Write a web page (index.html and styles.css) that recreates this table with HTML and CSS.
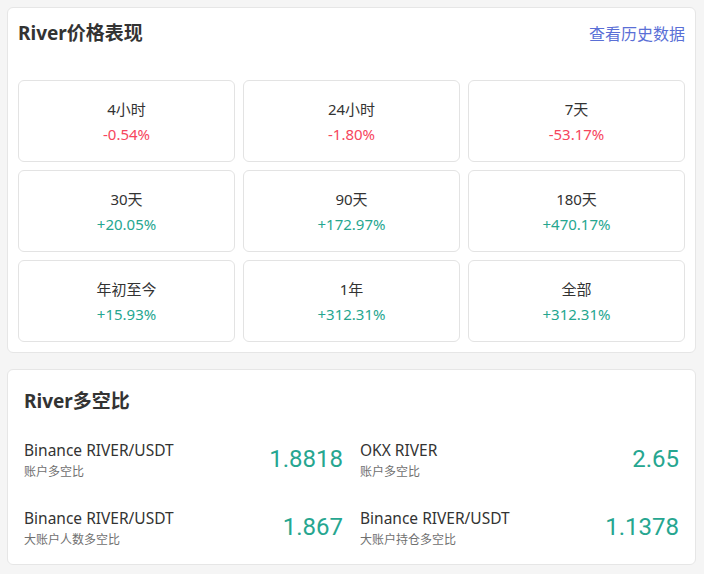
FILE: index.html
```html
<!DOCTYPE html>
<html lang="zh-CN">
<head>
<meta charset="utf-8">
<link rel="stylesheet" href="styles.css">
</head>
<body>
<section class="card perf">
  <header class="perf-head">
    <h2 class="title">River价格表现</h2>
    <a class="link" href="#">查看历史数据</a>
  </header>
  <div class="grid">
    <div class="cell"><div class="label">4小时</div><div class="val down">-0.54%</div></div>
    <div class="cell"><div class="label">24小时</div><div class="val down">-1.80%</div></div>
    <div class="cell"><div class="label">7天</div><div class="val down">-53.17%</div></div>
    <div class="cell"><div class="label">30天</div><div class="val up">+20.05%</div></div>
    <div class="cell"><div class="label">90天</div><div class="val up">+172.97%</div></div>
    <div class="cell"><div class="label">180天</div><div class="val up">+470.17%</div></div>
    <div class="cell"><div class="label">年初至今</div><div class="val up">+15.93%</div></div>
    <div class="cell"><div class="label">1年</div><div class="val up">+312.31%</div></div>
    <div class="cell"><div class="label">全部</div><div class="val up">+312.31%</div></div>
  </div>
</section>
<section class="card ratio">
  <h2 class="title">River多空比</h2>
  <div class="rgrid">
    <div class="row"><div class="info"><div class="name">Binance RIVER/USDT</div><div class="sub">账户多空比</div></div><div class="num">1.8818</div></div>
    <div class="row"><div class="info"><div class="name">OKX RIVER</div><div class="sub">账户多空比</div></div><div class="num">2.65</div></div>
    <div class="row"><div class="info"><div class="name">Binance RIVER/USDT</div><div class="sub">大账户人数多空比</div></div><div class="num">1.867</div></div>
    <div class="row"><div class="info"><div class="name">Binance RIVER/USDT</div><div class="sub">大账户持仓多空比</div></div><div class="num">1.1378</div></div>
  </div>
</section>
</body>
</html>
```
FILE: styles.css
```css
* { box-sizing: border-box; }
html, body { margin: 0; padding: 0; }
body {
  background: #f5f5f5;
  font-family: "Noto Sans", "Noto Sans CJK SC", sans-serif;
  color: #333;
  padding: 7px 8px 0 7px;
  width: 704px;
}
.card {
  background: #fff;
  border: 1px solid #e6e6e6;
  border-radius: 6px;
}
.perf { padding: 10px 10px 10px 10px; }
.perf-head {
  display: flex;
  justify-content: space-between;
  align-items: center;
  height: 30px;
  margin-bottom: 32px;
}
.title {
  margin: 0;
  font-size: 19px;
  font-weight: 700;
  color: #333;
  line-height: 30px;
}
.link {
  font-size: 16px;
  color: #5a6fd6;
  text-decoration: none;
}
.grid {
  display: grid;
  grid-template-columns: repeat(3, 1fr);
  gap: 8px 8px;
}
.cell {
  height: 82px;
  border: 1px solid #e3e3e3;
  border-radius: 6px;
  display: flex;
  flex-direction: column;
  align-items: center;
  justify-content: center;
}
.label { font-size: 15px; line-height: 22px; color: #333; }
.val { font-size: 15px; line-height: 22px; margin-top: 3px; }
.down { color: #f6465d; }
.up { color: #26a690; }
.ratio {
  margin-top: 16px;
  padding: 15px 16px 14px 16px;
  height: 196px;
}
.ratio .title { line-height: 32px; margin-bottom: 22px; }
.rgrid {
  display: grid;
  grid-template-columns: 1fr 1fr;
  gap: 26px 17px;
}
.row {
  display: flex;
  justify-content: space-between;
  align-items: center;
}
.name { font-size: 15.5px; line-height: 22px; color: #333; }
.sub { font-size: 12px; line-height: 18px; margin-top: 2px; color: #707070; }
.num { font-family: "Roboto", "Noto Sans", sans-serif; font-size: 24px; color: #26a690; line-height: 30px; margin-bottom: 3px; }
```
